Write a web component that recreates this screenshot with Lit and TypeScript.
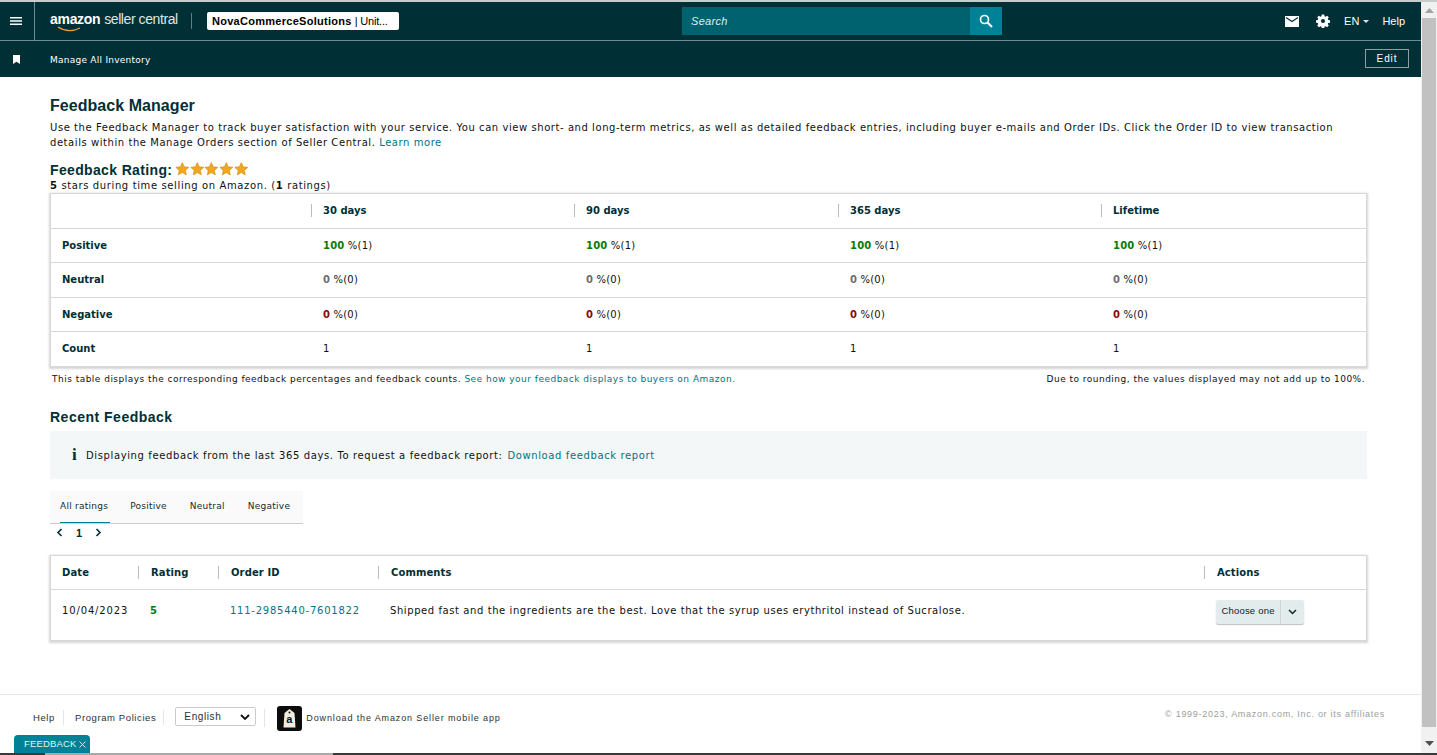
import { LitElement, html, css, svg } from "lit";
import { customElement } from "lit/decorators.js";

const star = svg`<path d="M7 .6l1.900 4.200 4.600.5-3.400 3.100.9 4.500L7 10.600l-4 2.300.9-4.500L.5 5.300l4.600-.5z" fill="#f3a81c" stroke="#c98a12" stroke-width=".6"/>`;

const summaryRows = [
  { label: "Positive", value: "100", count: 1, tone: "pos" },
  { label: "Neutral", value: "0", count: 0, tone: "neu" },
  { label: "Negative", value: "0", count: 0, tone: "neg" },
];

@customElement("app-root")
export class AppRoot extends LitElement {
  static styles = css`
    :host {
      display: flex;
      flex-direction: column;
      height: 755px;
      overflow: hidden;
      position: relative;
      background: #fff;
      color: #0f1111;
      font-family: "DejaVu Sans", sans-serif;
      font-size: 10px;
    }
    a { color: #007482; text-decoration: none; }
    .topline { height: 2px; background: #c9cccc; flex: none; }
    .middle { flex: 1; display: flex; min-height: 0; }
    .page { flex: 1; display: flex; flex-direction: column; min-width: 0; }
    .scrollbar {
      width: 16px; flex: none; background: #f1f1f1;
      display: flex; flex-direction: column; align-items: center;
    }
    .sb-up { height: 16px; flex: none; display: flex; align-items: center; justify-content: center; }
    .sb-down { height: 26px; flex: none; display: flex; align-items: flex-end; justify-content: center; padding-bottom: 7px; box-sizing: border-box; }
    .sb-thumb { flex: 1; width: 14px; background: #c1c1c1; }
    .bottombar { height: 2px; flex: none; display: flex; background: #3a3a3a; }
    .bottombar span { margin-left: 45px; width: 288px; background: #a9a9a9; }

    .nav1 {
      height: 38px; flex: none; display: flex; align-items: center;
      background: #002f36; border-bottom: 1px solid #6f8c90; color: #fff;
    }
    .burger {
      height: 38px; flex: none; border-right: 1px solid #6f8c90; padding-right: 3px;
      box-sizing: border-box; width: 35px;
      display: flex; align-items: center; justify-content: center;
    }
    .logo {
      margin-left: 15px; width: 127px; height: 24px; flex: none; position: relative;
      font-family: "Liberation Sans", sans-serif; font-size: 14px; line-height: 21px;
      white-space: nowrap; color: #dfe6e7;
    }
    .logo b { color: #fff; letter-spacing: -.3px; }
    .logo span { letter-spacing: -.42px; }
    .logo svg { position: absolute; left: 7px; top: 17px; }
    .logo-sep { width: 1px; height: 16px; background: #5f7d82; margin-left: 14px; flex: none; }
    .account {
      margin-left: 15px; width: 192px; height: 18px; flex: none; box-sizing: border-box;
      background: #fff; border-radius: 2px; color: #000; padding-left: 5px;
      font-family: "Liberation Sans", sans-serif; font-size: 11px; line-height: 18px; white-space: nowrap;
    }
    .account b { letter-spacing: .28px; }
    .account span { letter-spacing: -.2px; }
    .search { margin-left: 283px; display: flex; height: 28px; width: 320px; flex: none; }
    .search-input {
      flex: 1; background: #00626f; color: #dfeef0; font-style: italic;
      font-family: "Liberation Sans", sans-serif; font-size: 11px; line-height: 28px;
      padding-left: 9px; letter-spacing: .3px;
    }
    .search-btn {
      width: 32px; background: #008296; display: flex; align-items: center; justify-content: center;
    }
    .nav-right {
      margin-left: auto; display: flex; align-items: center; padding-right: 16px;
      font-family: "Liberation Sans", sans-serif; font-size: 11px;
    }
    .nav-right svg { display: block; }
    .mail { margin-right: 17px; }
    .gear { margin-right: 14px; }
    .lang { display: flex; align-items: center; gap: 4px; margin-right: 13px; }
    .caret { width: 0; height: 0; border: 3.5px solid transparent; border-top-color: #dfe6e7; border-bottom: 0; }

    .nav2 {
      height: 36px; flex: none; display: flex; align-items: center; background: #002f36;
      color: #fff; padding: 0 12px 0 13px; font-size: 9px;
    }
    .nav2 .label {
      margin-left: 30px; font-size: 9px; letter-spacing: .25px; margin-top: 2px;
    }
    .edit {
      margin-left: auto; width: 44px; height: 19px; box-sizing: border-box; text-align: center;
      border: 1px solid #8aa0a3; font-size: 10px; line-height: 17px; letter-spacing: .9px;
      font-family: "Liberation Sans", sans-serif; margin-top: -2px;
    }

    main { flex: 1; padding: 0 54px 0 50px; min-height: 0; }
    h1, h2 {
      font-family: "Liberation Sans", sans-serif; font-weight: 700; color: #002f36; margin: 0;
    }
    h1 { font-size: 16px; line-height: 18px; padding-top: 20px; letter-spacing: .05px; }
    .intro { margin: 5px 0 0; line-height: 15px; letter-spacing: .56px; }
    .rating-head { display: flex; align-items: center; margin-top: 11px; height: 14px; }
    .rating-head h2 { font-size: 14px; line-height: 16px; margin-top: 3px; letter-spacing: .35px; }
    .stars { display: flex; margin-left: 3px; margin-top: 1px; }
    .stars svg { width: 14.6px; height: 14px; display: block; }
    .stars-note { line-height: 13px; margin-top: 4px; letter-spacing: .62px; }

    .card {
      border: 1px solid #d5d9d9; box-shadow: 0 1px 2px 1px rgba(0, 0, 0, .16); background: #fff;
    }
    .summary { margin-top: 1px; }
    .sum-row {
      display: grid; grid-template-columns: 260px 263px 264px 263px 1fr;
      border-bottom: 1px solid #d5d9d9; height: 33.5px; align-items: center;
    }
    .sum-row:last-child { border-bottom: 0; }
    .cell { padding-left: 12px; white-space: nowrap; letter-spacing: .2px; }
    .head { font-weight: 700; color: #002f36; letter-spacing: 0; }
    .sum-row .head { padding-left: 11px; }
    .sep { border-left: 1px solid #b8bdbd; line-height: 13px; }
    .pos { color: #067d06; font-weight: 700; }
    .neg { color: #8a0a0a; font-weight: 700; }
    .neu { color: #6d6d6d; font-weight: 700; }

    .notes {
      display: flex; justify-content: space-between; padding: 6px 2px 0; font-size: 9px;
      line-height: 12px; letter-spacing: .48px;
    }
    .recent { font-size: 14px; line-height: 16px; margin-top: 24px; letter-spacing: .5px; }
    .notice {
      margin-top: 6px; height: 48px; box-sizing: border-box; padding: 2px 0 0 22px; background: #f3f7f7;
      display: flex; align-items: center; letter-spacing: .62px;
    }
    .notice .i {
      font-family: "Liberation Serif", serif; font-weight: 700; font-size: 17px; width: 14px;
      color: #002f36; margin-top: -2px;
    }
    .notice a { margin-left: 1px; }
    .tabs {
      display: flex; width: 243px; height: 32px; margin-top: 12px; background: #fafafa;
      border-bottom: 1px solid #c8cccc; padding-left: 10px;
      font-size: 9px; letter-spacing: .25px;
    }
    .tab { padding-top: 10px; margin-right: 23px; position: relative; color: #202a2b; white-space: nowrap; flex: none; }
    .tab.on { margin-right: 22px; }
    .tab.on::after {
      content: ""; position: absolute; left: 0; right: -2px; bottom: 0; height: 1px; background: #008296;
    }
    .pager {
      display: flex; align-items: center; height: 18px; padding-left: 6px; gap: 13px;
      font-family: "Liberation Sans", sans-serif; font-weight: 700; font-size: 11px; color: #002f36;
    }
    .recent-table { margin-top: 13px; height: 84px; }
    .fb-row { display: grid; grid-template-columns: 87px 80px 160px 826px 1fr; }
    .fb-row.top { height: 33px; align-items: center; border-bottom: 1px solid #d5d9d9; }
    .fb-row.body { height: 51px; padding-top: 10px; box-sizing: border-box; }
    .fb-row.top .cell:first-child { padding-left: 11px; }
    .fb-row.body .cell { line-height: 22px; letter-spacing: .58px; }
    .fb-row .head { letter-spacing: .1px; }
    .fb-row.body .date { padding-left: 11px; letter-spacing: .86px; }
    .fb-row.body .order { padding-left: 12px; letter-spacing: .76px; }
    .actions { display: flex; padding-left: 12px; }
    .split {
      display: flex; height: 24px; background: #e3ecec; border-radius: 2px;
      box-shadow: 0 1px 1px rgba(0, 0, 0, .25); font-family: "Liberation Sans", sans-serif;
      font-size: 9.5px; line-height: 22px; color: #0f1c1e; letter-spacing: .2px;
    }
    .split span { width: 65px; text-align: center; border-right: 1px solid #cdd6d6; box-sizing: border-box; }
    .split i { width: 23px; display: flex; align-items: center; justify-content: center; }

    footer {
      height: 59px; flex: none; border-top: 1px solid #e3e6e6; display: flex; align-items: center;
      padding: 0 36px 10px 33px; box-sizing: border-box; font-family: "Liberation Sans", sans-serif; font-size: 9.5px;
      letter-spacing: .6px; color: #2a3334;
    }
    .f-help { padding-right: 8px; border-right: 1px solid #e3e6e6; line-height: 15px; margin-top: -3px; }
    .f-prog { padding: 0 7px 0 11px; border-right: 1px solid #e3e6e6; line-height: 15px; margin-top: -3px; }
    .f-select {
      margin-left: 11px; width: 81px; height: 19px; box-sizing: border-box; border: 1px solid #c9cccc;
      border-radius: 2px; display: flex; align-items: center; justify-content: space-between;
      padding: 0 5px 0 8px; font-family: "Liberation Sans", sans-serif; font-size: 10px; margin-top: -5px;
    }
    .f-sep { width: 1px; height: 18px; background: #e3e6e6; margin: -3px 12px 0 8px; }
    .f-app { width: 25px; height: 25px; margin-top: -2px; flex: none; margin-right: 4px; }
    .f-text { margin-top: -3px; letter-spacing: .87px; font-size: 9px; }
    .copy { margin-left: auto; margin-top: -10px; color: #9aa0a0; font-size: 9px; letter-spacing: .72px; }

    .feedback-tab {
      position: absolute; left: 14px; bottom: 2px; width: 76px; height: 18px; box-sizing: border-box;
      background: #008296; color: #e4f3f5; border-radius: 4px 4px 0 0;
      font-family: "Liberation Sans", sans-serif; font-size: 9.5px; line-height: 18px; padding-left: 10px;
      letter-spacing: .15px; white-space: nowrap; display: flex; align-items: center; gap: 3px;
    }
  `;

  renderSummaryRow(r: { label: string; value: string; count: number; tone: string }) {
    return html`<div class="sum-row">
      <div class="cell head">${r.label}</div>
      ${[0, 1, 2, 3].map(() => html`<div class="cell"><span class=${r.tone}>${r.value}</span> %(${r.count})</div>`)}
    </div>`;
  }

  render() {
    return html`
      <div class="topline"></div>
      <div class="middle">
        <div class="page">
          <div class="nav1">
            <div class="burger">
              <svg width="12" height="8" viewBox="0 0 12 8"><path d="M0 .75h12M0 4h12M0 7.25h12" stroke="#fff" stroke-width="1.4"/></svg>
            </div>
            <div class="logo">
              <b>amazon</b> <span>seller central</span>
              <svg width="26" height="6" viewBox="0 0 26 6"><path d="M1 1c7 4.5 15 4.5 22 1" fill="none" stroke="#f0a030" stroke-width="1.3"/></svg>
            </div>
            <div class="logo-sep"></div>
            <div class="account"><b>NovaCommerceSolutions</b> <span>| Unit...</span></div>
            <div class="search">
              <div class="search-input">Search</div>
              <div class="search-btn">
                <svg width="14" height="14" viewBox="0 0 14 14"><circle cx="5.5" cy="5.5" r="4" fill="none" stroke="#fff" stroke-width="1.6"/><path d="M8.5 8.5l4.5 4.5" stroke="#fff" stroke-width="2"/></svg>
              </div>
            </div>
            <div class="nav-right">
              <svg class="mail" width="14" height="11" viewBox="0 0 14 11"><path d="M0 0h14v11H0z" fill="#fff"/><path d="M1 1.5l6 4 6-4" fill="none" stroke="#002f36" stroke-width="1.2"/></svg>
              <svg class="gear" width="14" height="14" viewBox="-.5 0 15 14"><path fill="#fff" fill-rule="evenodd" d="M5.7 0h2.600l.3 1.900 1.200.5L11.400 1.300l1.800 1.800-1.100 1.600.5 1.200 1.900.3v2.600l-1.900.3-.5 1.200 1.100 1.600-1.800 1.800-1.600-1.100-1.200.5-.3 1.900H5.700l-.3-1.900-1.200-.5-1.600 1.100L.8 11.900l1.100-1.600-.5-1.200L-.5 8.800V6.200l1.900-.3.500-1.200L.8 3.100l1.800-1.800 1.600 1.100 1.200-.5zM7 4.800a2.200 2.200 0 1 0 0 4.400 2.200 2.200 0 0 0 0-4.400z"/></svg>
              <div class="lang">EN <span class="caret"></span></div>
              <div>Help</div>
            </div>
          </div>
          <div class="nav2">
            <svg width="7" height="9" viewBox="0 0 7 9"><path d="M0 0h7v9L3.5 6.800 0 9z" fill="#fff"/></svg>
            <div class="label">Manage All Inventory</div>
            <div class="edit">Edit</div>
          </div>
          <main>
            <h1>Feedback Manager</h1>
            <p class="intro">Use the Feedback Manager to track buyer satisfaction with your service. You can view short- and long-term metrics, as well as detailed feedback entries, including buyer e-mails and Order IDs. Click the Order ID to view transaction details within the Manage Orders section of Seller Central. <a href="#">Learn more</a></p>
            <div class="rating-head">
              <h2>Feedback Rating:</h2>
              <div class="stars">
                ${[0, 1, 2, 3, 4].map(() => html`<svg viewBox="0 0 14 14">${star}</svg>`)}
              </div>
            </div>
            <div class="stars-note"><b>5</b> stars during time selling on Amazon. (<b>1</b> ratings)</div>
            <div class="card summary">
              <div class="sum-row">
                <div class="cell head"></div>
                ${["30 days", "90 days", "365 days", "Lifetime"].map((d) => html`<div class="cell head sep">${d}</div>`)}
              </div>
              ${summaryRows.map((r) => this.renderSummaryRow(r))}
              <div class="sum-row">
                <div class="cell head">Count</div>
                ${[0, 1, 2, 3].map(() => html`<div class="cell">1</div>`)}
              </div>
            </div>
            <div class="notes">
              <div>This table displays the corresponding feedback percentages and feedback counts. <a href="#">See how your feedback displays to buyers on Amazon.</a></div>
              <div>Due to rounding, the values displayed may not add up to 100%.</div>
            </div>
            <h2 class="recent">Recent Feedback</h2>
            <div class="notice"><span class="i">i</span>Displaying feedback from the last 365 days. To request a feedback report:&nbsp;<a href="#">Download feedback report</a></div>
            <div class="tabs">
              <div class="tab on">All ratings</div>
              <div class="tab">Positive</div>
              <div class="tab">Neutral</div>
              <div class="tab">Negative</div>
            </div>
            <div class="pager">
              <svg width="7" height="9" viewBox="0 0 7 9"><path d="M5.5 1L2 4.500 5.5 8" fill="none" stroke="#002f36" stroke-width="1.6"/></svg>
              <span>1</span>
              <svg width="7" height="9" viewBox="0 0 7 9"><path d="M1.5 1L5 4.500 1.5 8" fill="none" stroke="#002f36" stroke-width="1.6"/></svg>
            </div>
            <div class="card recent-table">
              <div class="fb-row top">
                <div class="cell head">Date</div>
                <div class="cell head sep">Rating</div>
                <div class="cell head sep">Order ID</div>
                <div class="cell head sep">Comments</div>
                <div class="cell head sep">Actions</div>
              </div>
              <div class="fb-row body">
                <div class="cell date">10/04/2023</div>
                <div class="cell"><span class="pos">5</span></div>
                <div class="cell order"><a href="#">111-2985440-7601822</a></div>
                <div class="cell">Shipped fast and the ingredients are the best. Love that the syrup uses erythritol instead of Sucralose.</div>
                <div class="actions">
                  <div class="split">
                    <span>Choose one</span>
                    <i><svg width="9" height="6" viewBox="0 0 9 6"><path d="M1 1l3.500 3.500L8 1" fill="none" stroke="#0f2a2e" stroke-width="1.5"/></svg></i>
                  </div>
                </div>
              </div>
            </div>
          </main>
          <footer>
            <div class="f-help">Help</div>
            <div class="f-prog">Program Policies</div>
            <div class="f-select">English
              <svg width="10" height="6" viewBox="0 0 10 6"><path d="M1 1l4 4 4-4" fill="none" stroke="#111" stroke-width="1.8"/></svg>
            </div>
            <div class="f-sep"></div>
            <svg class="f-app" viewBox="0 0 25 25">
              <rect width="25" height="25" rx="3" fill="#0c0c0c"/>
              <path d="M7.5 7L12.500 3l5 4 1 14.500h-12z" fill="#f2ede0"/>
              <circle cx="12.5" cy="6.500" r="1" fill="#0c0c0c"/>
              <text x="12.5" y="17" text-anchor="middle" font-family="Liberation Sans" font-weight="700" font-size="11" fill="#111">a</text>
            </svg>
            <div class="f-text">Download the Amazon Seller mobile app</div>
            <div class="copy">© 1999-2023, Amazon.com, Inc. or its affiliates</div>
          </footer>
        </div>
        <div class="scrollbar">
          <div class="sb-up"><svg width="9" height="5" viewBox="0 0 9 5"><path d="M4.5 0L9 5H0z" fill="#a3a3a3"/></svg></div>
          <div class="sb-thumb"></div>
          <div class="sb-down"><svg width="9" height="5" viewBox="0 0 9 5"><path d="M0 0h9L4.500 5z" fill="#505050"/></svg></div>
        </div>
      </div>
      <div class="bottombar"><span></span></div>
      <div class="feedback-tab">FEEDBACK <svg width="7" height="7" viewBox="0 0 7 7"><path d="M.5.5l6 6M6.500.5l-6 6" stroke="#e4f3f5" stroke-width=".9"/></svg></div>
    `;
  }
}
